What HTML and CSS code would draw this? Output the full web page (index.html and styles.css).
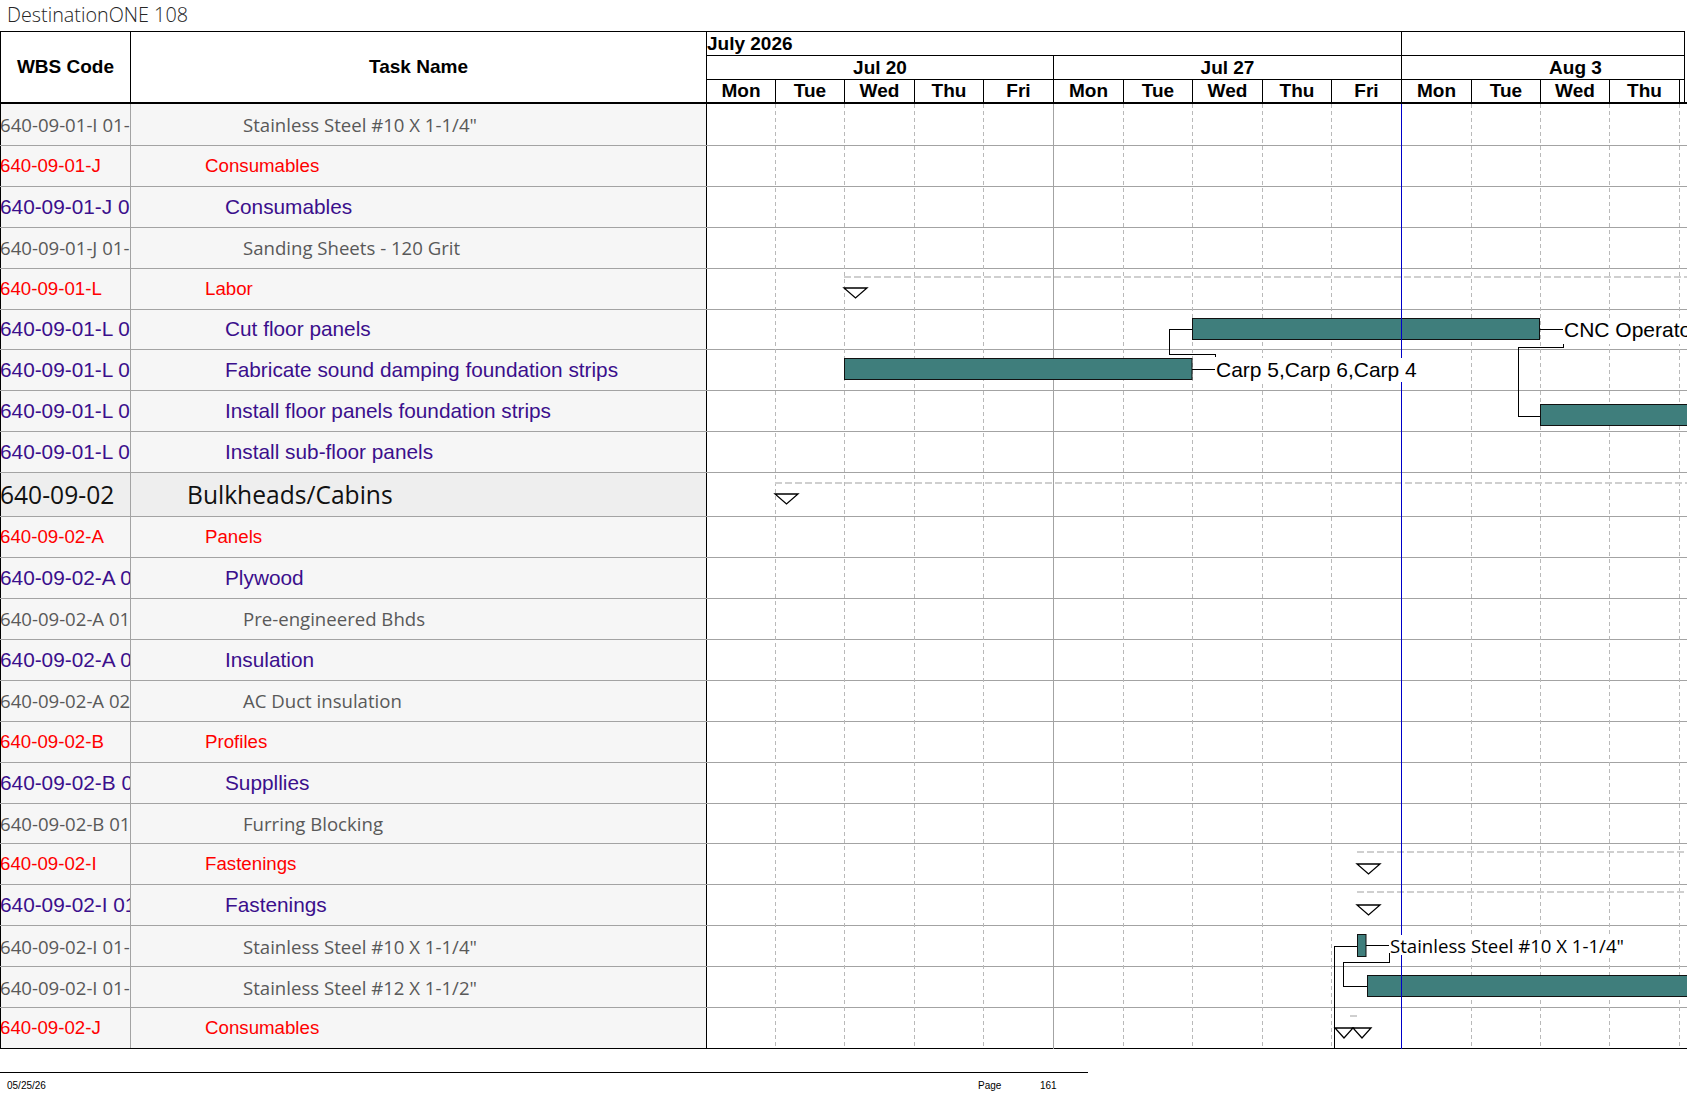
FILE: index.html
```html
<!DOCTYPE html>
<html lang="en">
<head>
<meta charset="utf-8">
<title>DestinationONE 108</title>
<link rel="stylesheet" href="styles.css">
</head>
<body>
<div class="title">DestinationONE 108</div>

<div class="head">
  <div class="h-wbs">WBS Code</div>
  <div class="h-task">Task Name</div>
  <div class="h-time">
    <div class="months">
      <div class="month">July 2026</div>
      <div class="month"></div>
    </div>
    <div class="weeks">
      <div class="week">Jul 20</div>
      <div class="week">Jul 27</div>
      <div class="week"><span class="week-full">Aug 3</span></div>
    </div>
    <div class="days">
      <div class="day">Mon</div><div class="day">Tue</div><div class="day">Wed</div><div class="day">Thu</div><div class="day">Fri</div>
      <div class="day">Mon</div><div class="day">Tue</div><div class="day">Wed</div><div class="day">Thu</div><div class="day">Fri</div>
      <div class="day">Mon</div><div class="day">Tue</div><div class="day">Wed</div><div class="day">Thu</div><div class="day"></div>
    </div>
  </div>
</div>

<div class="body">
  <div class="row r-gray"><div class="wbs">640-09-01-I 01-01</div><div class="task">Stainless Steel #10 X 1-1/4"</div><div class="chart"></div></div>
  <div class="row r-red"><div class="wbs">640-09-01-J</div><div class="task">Consumables</div><div class="chart"></div></div>
  <div class="row r-pur"><div class="wbs">640-09-01-J 01</div><div class="task">Consumables</div><div class="chart"></div></div>
  <div class="row r-gray"><div class="wbs">640-09-01-J 01-01</div><div class="task">Sanding Sheets - 120 Grit</div><div class="chart"></div></div>
  <div class="row r-red"><div class="wbs">640-09-01-L</div><div class="task">Labor</div><div class="chart"></div></div>
  <div class="row r-pur"><div class="wbs">640-09-01-L 01</div><div class="task">Cut floor panels</div><div class="chart"></div></div>
  <div class="row r-pur"><div class="wbs">640-09-01-L 02</div><div class="task">Fabricate sound damping foundation strips</div><div class="chart"></div></div>
  <div class="row r-pur"><div class="wbs">640-09-01-L 03</div><div class="task">Install floor panels foundation strips</div><div class="chart"></div></div>
  <div class="row r-pur"><div class="wbs">640-09-01-L 04</div><div class="task">Install sub-floor panels</div><div class="chart"></div></div>
  <div class="row r-bulk"><div class="wbs">640-09-02</div><div class="task">Bulkheads/Cabins</div><div class="chart"></div></div>
  <div class="row r-red"><div class="wbs">640-09-02-A</div><div class="task">Panels</div><div class="chart"></div></div>
  <div class="row r-pur"><div class="wbs">640-09-02-A 01</div><div class="task">Plywood</div><div class="chart"></div></div>
  <div class="row r-gray"><div class="wbs">640-09-02-A 01-01</div><div class="task">Pre-engineered Bhds</div><div class="chart"></div></div>
  <div class="row r-pur"><div class="wbs">640-09-02-A 02</div><div class="task">Insulation</div><div class="chart"></div></div>
  <div class="row r-gray"><div class="wbs">640-09-02-A 02-01</div><div class="task">AC Duct insulation</div><div class="chart"></div></div>
  <div class="row r-red"><div class="wbs">640-09-02-B</div><div class="task">Profiles</div><div class="chart"></div></div>
  <div class="row r-pur"><div class="wbs">640-09-02-B 01</div><div class="task">Suppllies</div><div class="chart"></div></div>
  <div class="row r-gray"><div class="wbs">640-09-02-B 01-01</div><div class="task">Furring Blocking</div><div class="chart"></div></div>
  <div class="row r-red"><div class="wbs">640-09-02-I</div><div class="task">Fastenings</div><div class="chart"></div></div>
  <div class="row r-pur"><div class="wbs">640-09-02-I 01</div><div class="task">Fastenings</div><div class="chart"></div></div>
  <div class="row r-gray"><div class="wbs">640-09-02-I 01-01</div><div class="task">Stainless Steel #10 X 1-1/4"</div><div class="chart"></div></div>
  <div class="row r-gray"><div class="wbs">640-09-02-I 01-02</div><div class="task">Stainless Steel #12 X 1-1/2"</div><div class="chart"></div></div>
  <div class="row r-red"><div class="wbs">640-09-02-J</div><div class="task">Consumables</div><div class="chart"></div></div>

  <svg class="gantt" viewBox="706 104 981 945" width="981" height="945" xmlns="http://www.w3.org/2000/svg">
    <g class="grid-day">
      <line x1="775.5" y1="104" x2="775.5" y2="1049"/>
      <line x1="844.5" y1="104" x2="844.5" y2="1049"/>
      <line x1="914.5" y1="104" x2="914.5" y2="1049"/>
      <line x1="983.5" y1="104" x2="983.5" y2="1049"/>
      <line x1="1123.5" y1="104" x2="1123.5" y2="1049"/>
      <line x1="1192.5" y1="104" x2="1192.5" y2="1049"/>
      <line x1="1262.5" y1="104" x2="1262.5" y2="1049"/>
      <line x1="1331.5" y1="104" x2="1331.5" y2="1049"/>
      <line x1="1471.5" y1="104" x2="1471.5" y2="1049"/>
      <line x1="1540.5" y1="104" x2="1540.5" y2="1049"/>
      <line x1="1609.5" y1="104" x2="1609.5" y2="1049"/>
      <line x1="1679.5" y1="104" x2="1679.5" y2="1049"/>
    </g>
    <line class="grid-week" x1="1053.5" y1="104" x2="1053.5" y2="1049"/>

    <g class="summary-line">
      <line x1="844" y1="277" x2="1690" y2="277"/>
      <line x1="775" y1="483" x2="1690" y2="483"/>
      <line x1="1357" y1="852" x2="1690" y2="852"/>
      <line x1="1357" y1="892" x2="1690" y2="892"/>
      <line x1="1350" y1="1016" x2="1357" y2="1016"/>
    </g>

    <g class="tri">
      <polygon points="844,288 867,288 855.5,298"/>
      <polygon points="775,494 798,494 786.5,504"/>
      <polygon points="1357,864 1380,864 1368.5,874"/>
      <polygon points="1357,905 1380,905 1368.5,915"/>
      <polygon points="1335,1028 1353,1028 1344,1038"/>
      <polygon points="1353,1028 1371,1028 1362,1038"/>
    </g>

    <g class="bar">
      <rect x="1192.5" y="318.5" width="347" height="21"/>
      <rect x="844.5" y="358.5" width="347.5" height="21"/>
      <rect x="1540.5" y="404.5" width="200" height="21"/>
      <rect x="1357.5" y="934.5" width="8.5" height="22"/>
      <rect x="1367.5" y="975.5" width="400" height="21"/>
    </g>

    <line class="today" x1="1401.5" y1="104" x2="1401.5" y2="1049"/>

    <g class="lbl-bg">
      <rect x="1563" y="319" width="130" height="25"/>
      <rect x="1215" y="358" width="203" height="24"/>
      <rect x="1389" y="935" width="237" height="20"/>
    </g>
    <text class="lbl" x="1564" y="337">CNC Operator</text>
    <text class="lbl" x="1216" y="377">Carp 5,Carp 6,Carp 4</text>
    <text class="lbl-seg" x="1390" y="953">Stainless Steel #10 X 1-1/4"</text>

    <g class="link">
      <polyline points="1540,329.5 1563,329.5"/>
      <polyline points="1192,369.5 1215,369.5"/>
      <polyline points="1366,945.5 1389,945.5"/>
      <polyline points="1192,329.5 1169.5,329.5 1169.5,354.5 1215.5,354.5 1215.5,357"/>
      <polyline points="1563.5,344 1563.5,347.5 1518.5,347.5 1518.5,416.5 1540,416.5"/>
      <polyline points="1334.5,1049 1334.5,946.5 1357,946.5"/>
      <polyline points="1389.5,953 1389.5,962.5 1343.5,962.5 1343.5,986.5 1367,986.5"/>
    </g>
  </svg>
</div>

<div class="footer">
  <span class="f-date">05/25/26</span>
  <span class="f-page">Page</span>
  <span class="f-num">161</span>
</div>
</body>
</html>
```

FILE: styles.css
```css
* {
  box-sizing: border-box;
}

html,
body {
  margin: 0;
  padding: 0;
  background: #ffffff;
  overflow: hidden;
}

body {
  width: 1687px;
  height: 1097px;
  font-family: "Liberation Sans", Arial, sans-serif;
  color: #000;
}

.title {
  height: 31px;
  line-height: 30px;
  padding-left: 7px;
  font-family: "Open Sans", "Liberation Sans", sans-serif;
  font-size: 19.8px;
  font-weight: 300;
  color: #262626;
  white-space: nowrap;
}

/* ---------- header ---------- */
.head {
  display: grid;
  grid-template-columns: 131px 575px 979px;
  width: 1685px;
  height: 71px;
  border-top: 1px solid #000;
}

.h-wbs,
.h-task {
  display: flex;
  align-items: center;
  justify-content: center;
  font-size: 19px;
  font-weight: bold;
}

.h-wbs {
  border-left: 1px solid #000;
  border-right: 1px solid #000;
}

.h-time {
  display: flex;
  flex-direction: column;
  border-left: 1px solid #000;
  border-right: 1px solid #000;
  font-size: 19px;
  font-weight: bold;
}

.months {
  display: grid;
  grid-template-columns: 694px 1fr;
  height: 24px;
  border-bottom: 1px solid #000;
}

.month {
  line-height: 23px;
  white-space: nowrap;
}

.month + .month {
  border-left: 1px solid #000;
}

.weeks {
  display: grid;
  grid-template-columns: 346px 348px 1fr;
  height: 24px;
  border-bottom: 1px solid #000;
}

.week {
  line-height: 23px;
  text-align: center;
  overflow: hidden;
  white-space: nowrap;
}

.week + .week {
  border-left: 1px solid #000;
}

.week-full {
  display: block;
  width: 347px;
  text-align: center;
}

.days {
  display: grid;
  grid-template-columns: 68px 69px 70px 69px 70px 70px 69px 70px 69px 70px 70px 69px 69px 70px 1fr;
  height: 22px;
}

.day {
  line-height: 22px;
  text-align: center;
  overflow: hidden;
}

.day + .day {
  border-left: 1px solid #000;
}

/* ---------- body ---------- */
.body {
  position: relative;
  width: 1687px;
  border-top: 2px solid #000;
  border-bottom: 1px solid #000;
}

.row {
  display: grid;
  grid-template-columns: 131px 575px 1fr;
  height: 40.92px;
}

.row + .row {
  border-top: 1px solid #a3a3a3;
}

.wbs,
.task {
  display: flex;
  align-items: center;
  white-space: nowrap;
  overflow: hidden;
  background: #f6f6f6;
}

.wbs {
  border-left: 1px solid #000;
  border-right: 1px solid #a3a3a3;
  text-indent: -1px;
}

.chart {
  border-left: 1px solid #000;
  background: #ffffff;
}

/* row levels */
.r-red .wbs,
.r-red .task {
  color: #ff0000;
  font-size: 18.7px;
}

.r-red .task {
  padding-left: 74px;
}

.r-pur .wbs,
.r-pur .task {
  color: #3b0f8c;
  font-size: 20.8px;
}

.r-pur .task {
  padding-left: 94px;
}

.r-gray .wbs,
.r-gray .task {
  color: #595959;
  font-family: "Open Sans", "Liberation Sans", sans-serif;
  font-size: 18.6px;
}

.r-gray .task {
  padding-left: 112px;
}

.row.r-bulk {
  height: 44px;
}

.r-bulk .wbs,
.r-bulk .task {
  background: #eeeeee;
  color: #111;
  font-family: "Open Sans", "Liberation Sans", sans-serif;
  font-size: 24.6px;
}

.r-bulk .task {
  padding-left: 56px;
}

/* ---------- gantt canvas ---------- */
.gantt {
  position: absolute;
  left: 706px;
  top: 0;
  width: 981px;
  height: 945px;
  overflow: hidden;
}

.grid-day line {
  stroke: #b9b9b9;
  stroke-width: 1;
  stroke-dasharray: 4 3;
  shape-rendering: crispEdges;
}

.grid-week {
  stroke: #a3a3a3;
  stroke-width: 1;
  shape-rendering: crispEdges;
}

.summary-line line {
  stroke: #cfcfcf;
  stroke-width: 2;
  stroke-dasharray: 7 3;
}

.tri polygon {
  fill: #ffffff;
  stroke: #000;
  stroke-width: 1.3;
}

.bar rect {
  fill: #3f7e7c;
  stroke: #111;
  stroke-width: 1;
}

.today {
  stroke: #0000c8;
  stroke-width: 1;
  shape-rendering: crispEdges;
}

.lbl-bg rect {
  fill: #ffffff;
}

.lbl {
  font-family: "Liberation Sans", Arial, sans-serif;
  font-size: 21px;
  fill: #000;
}

.lbl-seg {
  font-family: "Open Sans", "Liberation Sans", sans-serif;
  font-size: 18.6px;
  fill: #000;
}

.link polyline {
  fill: none;
  stroke: #000;
  stroke-width: 1;
  shape-rendering: crispEdges;
}

/* ---------- footer ---------- */
.footer {
  display: flex;
  width: 1088px;
  margin-top: 23px;
  padding-top: 7px;
  border-top: 1px solid #000;
  font-size: 10px;
  line-height: 12px;
  color: #000;
}

.f-date {
  width: 978px;
  padding-left: 7px;
}

.f-page {
  width: 62px;
}
```
